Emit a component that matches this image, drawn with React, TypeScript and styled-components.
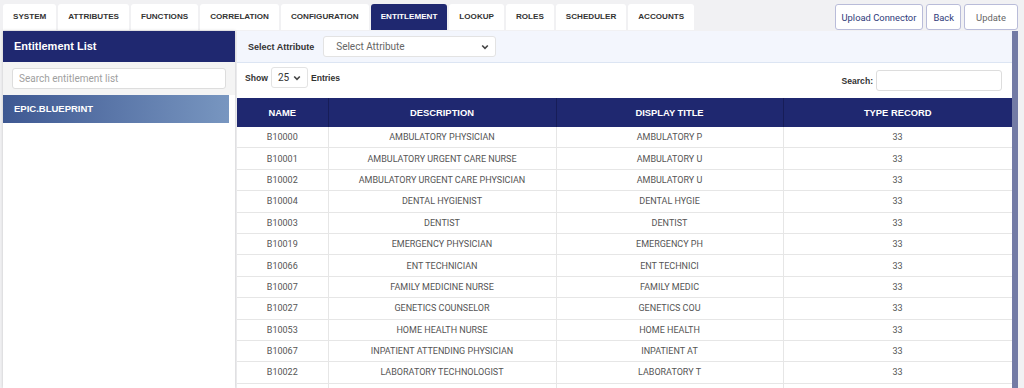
import React from "react";
import styled, { createGlobalStyle } from "styled-components";

const GlobalStyle = createGlobalStyle`
  body {
    margin: 0;
    background: #f1f1f3;
    font-family: Roboto, "Liberation Sans", sans-serif;
    overflow: hidden;
  }
`;

const Page = styled.div`
  height: 388px;
  display: flex;
  flex-direction: column;
`;

const TopBar = styled.div`
  display: flex;
  justify-content: space-between;
  align-items: flex-end;
  height: 31px;
  padding: 0 6px 0 3px;
  box-sizing: border-box;
`;

const Tabs = styled.div`
  display: flex;
  gap: 2px;
  height: 26px;
  margin-bottom: 1px;
`;

const Tab = styled.div<{ $active?: boolean }>`
  height: 26px;
  line-height: 26px;
  padding: 0 10px;
  border-radius: 3px 3px 0 0;
  background: ${(p) => (p.$active ? "#1f2870" : "#ffffff")};
  color: ${(p) => (p.$active ? "#ffffff" : "#333333")};
  font-family: "Liberation Sans", Arial, sans-serif;
  font-weight: bold;
  font-size: 8.1px;
`;

const Actions = styled.div`
  display: flex;
  gap: 3px;
  margin-bottom: 1px;
`;

const ActionButton = styled.button<{ $muted?: boolean }>`
  height: 26px;
  padding: 0 6px;
  min-width: ${(p) => (p.$muted ? "54px" : "0")};
  background: #ffffff;
  border: 1px solid #b9bcd9;
  border-radius: 3px;
  color: ${(p) => (p.$muted ? "#666666" : "#2f3b7a")};
  font-family: Roboto, sans-serif;
  font-size: 9.4px;
`;

const Main = styled.div`
  flex: 1;
  min-height: 0;
  display: flex;
  gap: 2px;
  padding: 0 6px 0 3px;
`;

const Sidebar = styled.div`
  width: 232px;
  flex-shrink: 0;
  background: #ffffff;
  box-shadow: 0 0 3px rgba(0, 0, 0, 0.18);
`;

const SidebarHeader = styled.div`
  height: 31px;
  line-height: 31px;
  padding-left: 11px;
  background: #1f2870;
  color: #ffffff;
  font-family: "Liberation Sans", Arial, sans-serif;
  font-weight: bold;
  font-size: 11px;
`;

const SidebarSearch = styled.div`
  background: #f4f4f4;
  padding: 6px 9px;
`;

const TextInput = styled.input`
  display: block;
  width: 100%;
  height: 21px;
  box-sizing: border-box;
  border: 1px solid #dddddd;
  border-radius: 3px;
  padding: 0 6px;
  font-family: Roboto, sans-serif;
  font-size: 10px;
  color: #555555;
  background: #ffffff;
  &::placeholder {
    color: #a0a0a0;
  }
`;

const ListItem = styled.div<{ $selected?: boolean }>`
  height: 28px;
  line-height: 28px;
  margin-right: 6px;
  padding-left: 11px;
  background: ${(p) =>
    p.$selected ? "linear-gradient(90deg, #3e5892 0%, #7896c0 100%)" : "#ffffff"};
  color: ${(p) => (p.$selected ? "#ffffff" : "#333333")};
  font-family: "Liberation Sans", Arial, sans-serif;
  font-weight: bold;
  font-size: 9.5px;
`;

const Content = styled.div`
  flex: 1;
  min-width: 0;
  background: #ffffff;
  border-right: 6px solid #737ba5;
  overflow: hidden;
`;

const FilterBar = styled.div`
  height: 31px;
  display: flex;
  align-items: center;
  gap: 9px;
  padding: 0 11px;
  background: #f3f6fd;
  border-bottom: 1px solid #dce5f3;
`;

const Label = styled.span<{ $size?: number }>`
  font-family: "Liberation Sans", Arial, sans-serif;
  font-weight: bold;
  font-size: ${(p) => p.$size ?? 9}px;
  color: #333333;
`;

const SelectBox = styled.div<{ $width: number; $height: number }>`
  width: ${(p) => p.$width}px;
  height: ${(p) => p.$height}px;
  box-sizing: border-box;
  display: flex;
  align-items: center;
  justify-content: space-between;
  padding: 0 6px 0 ${(p) => (p.$width > 100 ? 12 : 6)}px;
  background: #ffffff;
  border: 1px solid #e3e3e3;
  border-radius: 3px;
  font-family: Roboto, sans-serif;
  font-size: 10px;
  color: ${(p) => (p.$width > 100 ? "#666666" : "#333333")};
`;

const Toolbar = styled.div`
  display: flex;
  justify-content: space-between;
  align-items: flex-start;
  height: 35px;
  box-sizing: border-box;
  padding: 4px 10px 0 8px;
`;

const Group = styled.div<{ $offset?: number }>`
  display: flex;
  align-items: center;
  gap: 3px;
  margin-top: ${(p) => p.$offset ?? 0}px;
`;

const SearchInput = styled(TextInput)`
  width: 126px;
  height: 21px;
`;

const Table = styled.table`
  width: 775px;
  border-collapse: collapse;
  table-layout: fixed;
  font-family: Roboto, sans-serif;
`;

const Th = styled.th`
  height: 29px;
  padding: 0;
  background: #1f2870;
  color: #ffffff;
  font-family: "Liberation Sans", Arial, sans-serif;
  font-weight: bold;
  font-size: 9.4px;
  text-align: center;
  border-left: 1px solid #171d58;
  &:first-child {
    border-left: none;
  }
`;

const Td = styled.td`
  height: 20.4px;
  padding: 0;
  text-align: center;
  font-size: 9px;
  color: #555555;
  border: 1px solid #e6e6e6;
  border-top: none;
  &:first-child {
    border-left: none;
  }
`;

const Chevron = () => (
  <svg width="8" height="6" viewBox="0 0 8 6">
    <polyline points="1.2,1.5 4,4.3 6.8,1.5" fill="none" stroke="#444" strokeWidth="1.6" />
  </svg>
);

const tabs = [
  "SYSTEM",
  "ATTRIBUTES",
  "FUNCTIONS",
  "CORRELATION",
  "CONFIGURATION",
  "ENTITLEMENT",
  "LOOKUP",
  "ROLES",
  "SCHEDULER",
  "ACCOUNTS",
];

const rows: [string, string, string][] = [
  ["B10000", "AMBULATORY PHYSICIAN", "AMBULATORY P"],
  ["B10001", "AMBULATORY URGENT CARE NURSE", "AMBULATORY U"],
  ["B10002", "AMBULATORY URGENT CARE PHYSICIAN", "AMBULATORY U"],
  ["B10004", "DENTAL HYGIENIST", "DENTAL HYGIE"],
  ["B10003", "DENTIST", "DENTIST"],
  ["B10019", "EMERGENCY PHYSICIAN", "EMERGENCY PH"],
  ["B10066", "ENT TECHNICIAN", "ENT TECHNICI"],
  ["B10007", "FAMILY MEDICINE NURSE", "FAMILY MEDIC"],
  ["B10027", "GENETICS COUNSELOR", "GENETICS COU"],
  ["B10053", "HOME HEALTH NURSE", "HOME HEALTH"],
  ["B10067", "INPATIENT ATTENDING PHYSICIAN", "INPATIENT AT"],
  ["B10022", "LABORATORY TECHNOLOGIST", "LABORATORY T"],
];

const App: React.FC = () => {
  return (
    <Page>
      <GlobalStyle />
      <TopBar>
        <Tabs>
          {tabs.map((t) => (
            <Tab key={t} $active={t === "ENTITLEMENT"}>
              {t}
            </Tab>
          ))}
        </Tabs>
        <Actions>
          <ActionButton>Upload Connector</ActionButton>
          <ActionButton>Back</ActionButton>
          <ActionButton $muted>Update</ActionButton>
        </Actions>
      </TopBar>
      <Main>
        <Sidebar>
          <SidebarHeader>Entitlement List</SidebarHeader>
          <SidebarSearch>
            <TextInput placeholder="Search entitlement list" />
          </SidebarSearch>
          <ListItem $selected>EPIC.BLUEPRINT</ListItem>
        </Sidebar>
        <Content>
          <FilterBar>
            <Label>Select Attribute</Label>
            <SelectBox $width={173} $height={21}>
              <span>Select Attribute</span>
              <Chevron />
            </SelectBox>
          </FilterBar>
          <Toolbar>
            <Group>
              <Label $size={8.6}>Show</Label>
              <SelectBox $width={37} $height={21}>
                <span>25</span>
                <Chevron />
              </SelectBox>
              <Label $size={8.6}>Entries</Label>
            </Group>
            <Group $offset={3}>
              <Label $size={8.6}>Search:</Label>
              <SearchInput />
            </Group>
          </Toolbar>
          <Table>
            <colgroup>
              <col style={{ width: 91 }} />
              <col style={{ width: 228 }} />
              <col style={{ width: 227 }} />
              <col style={{ width: 229 }} />
            </colgroup>
            <thead>
              <tr>
                <Th>NAME</Th>
                <Th>DESCRIPTION</Th>
                <Th>DISPLAY TITLE</Th>
                <Th>TYPE RECORD</Th>
              </tr>
            </thead>
            <tbody>
              {rows.map(([name, desc, title]) => (
                <tr key={name}>
                  <Td>{name}</Td>
                  <Td>{desc}</Td>
                  <Td>{title}</Td>
                  <Td>33</Td>
                </tr>
              ))}
              <tr>
                <Td />
                <Td />
                <Td />
                <Td />
              </tr>
            </tbody>
          </Table>
        </Content>
      </Main>
    </Page>
  );
};

export default App;
